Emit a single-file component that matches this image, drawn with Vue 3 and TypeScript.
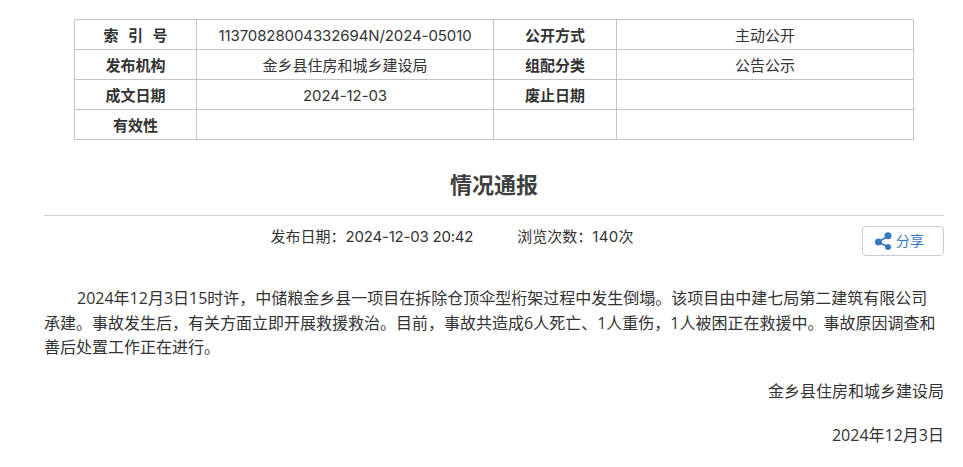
<script setup lang="ts">
const rows: [string, string, string, string][] = [
  ['索 引 号', '11370828004332694N/2024-05010', '公开方式', '主动公开'],
  ['发布机构', '金乡县住房和城乡建设局', '组配分类', '公告公示'],
  ['成文日期', '2024-12-03', '废止日期', ''],
  ['有效性', '', '', ''],
]
const isNumeric = (v: string): boolean => /^\d/.test(v)
</script>

<template>
  <div class="page">
    <table class="meta">
      <colgroup>
        <col class="c1" /><col class="c2" /><col class="c3" /><col class="c4" />
      </colgroup>
      <tbody>
        <tr v-for="r in rows" :key="r[0]">
          <th :class="{ spaced: r[0] === '索 引 号' }">{{ r[0] }}</th>
          <td :class="{ num: isNumeric(r[1]) }">{{ r[1] }}</td>
          <th>{{ r[2] }}</th>
          <td>{{ r[3] }}</td>
        </tr>
      </tbody>
    </table>
    <h1 class="title">情况通报</h1>
    <div class="info">
      <div class="dates">
        <span>发布日期：<span class="num tight">2024-12-03 20:42</span></span>
        <span>浏览次数：<span class="wide">140</span>次</span>
      </div>
      <button class="share" type="button">
        <svg width="17" height="18" viewBox="0 0 17 18" aria-hidden="true">
          <path d="M3.5 10 L13 4 M3.5 10 L13 15" stroke="#3a78c2" stroke-width="1.5" fill="none" />
          <circle cx="3.5" cy="10" r="3.5" fill="#3a78c2" />
          <circle cx="13" cy="3.7" r="3.5" fill="#3a78c2" />
          <circle cx="13" cy="15" r="3" fill="#3a78c2" />
        </svg>
        <span class="share-label">分享</span>
      </button>
    </div>
    <div class="body">
      <p class="para">2024年12月3日15时许，中储粮金乡县一项目在拆除仓顶伞型桁架过程中发生倒塌。该项目由中建七局第二建筑有限公司承建。事故发生后，有关方面立即开展救援救治。目前，事故共造成6人死亡、1人重伤，1人被困正在救援中。事故原因调查和善后处置工作正在进行。</p>
      <p class="sign">金乡县住房和城乡建设局</p>
      <p class="sign">2024年12月3日</p>
    </div>
  </div>
</template>

<style>
html, body { margin: 0; background: #fff; overflow: hidden; }
</style>

<style scoped>
.page {
  width: 900px;
  margin-left: 44px;
  padding-top: 19px;
  color: #333;
  font-family: "Inter", "Noto Sans CJK SC", sans-serif;
  font-size: 15px;
}
.meta {
  width: 839px;
  margin: 0 0 0 30px;
  border-collapse: collapse;
  table-layout: fixed;
}
.c1 { width: 122px; }
.c2 { width: 297px; }
.c3 { width: 123px; }
.c4 { width: 297px; }
.meta th, .meta td {
  height: 29px;
  padding: 2px 0 0;
  box-sizing: border-box;
  border: 1px solid #c4c4c4;
  text-align: center;
  font-size: 15px;
  line-height: 20px;
}
.meta tr { height: 30px; }
.meta th { font-weight: 700; }
.spaced { word-spacing: 6px; }
.meta td.num { letter-spacing: -0.1px; }
.num.tight { letter-spacing: -0.2px; }
.wide { letter-spacing: 0.3px; }
.title {
  margin: 28px 0 0;
  padding-bottom: 12px;
  border-bottom: 1px solid #d0d0d0;
  text-align: center;
  font-size: 22px;
  line-height: 35px;
  font-weight: 700;
  color: #404040;
}
.info {
  position: relative;
  height: 44px;
  padding-top: 11px;
}
.dates {
  display: flex;
  justify-content: center;
  gap: 44px;
  line-height: 20px;
  padding-right: 84px;
}
.share {
  position: absolute;
  right: 0;
  top: 10px;
  width: 82px;
  height: 30px;
  box-sizing: border-box;
  display: flex;
  align-items: center;
  gap: 4px;
  padding: 0 0 0 12px;
  border: 1px solid #ccc;
  border-radius: 4px;
  background: #fff;
  color: #3a78c2;
  font: inherit;
  font-size: 14px;
}
.share-label { line-height: 20px; }
.body {
  font-family: "Open Sans", "Noto Sans CJK SC", sans-serif;
  font-size: 16px;
  line-height: 24.5px;
}
.para {
  margin: 0;
  text-indent: 33px;
  padding: 15px 4px 0 0;
}
.sign {
  margin: 19.5px 0 0;
  text-align: right;
}
</style>
